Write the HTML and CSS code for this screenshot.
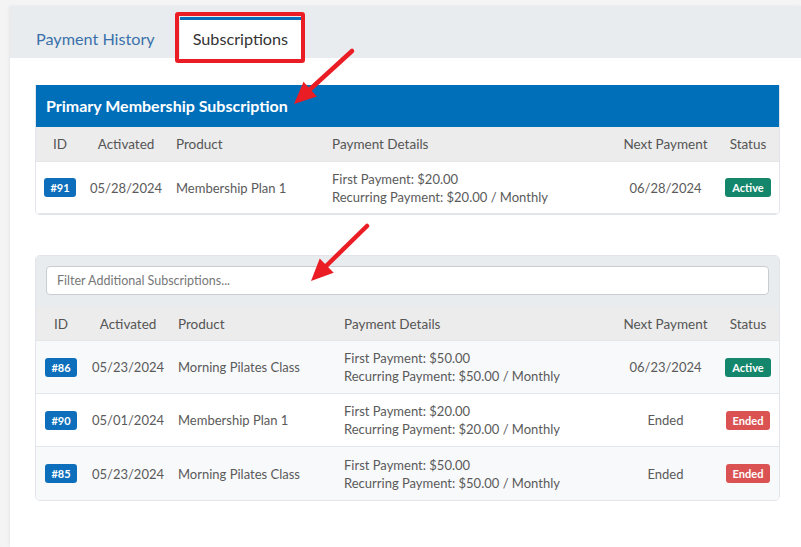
FILE: index.html
```html
<!DOCTYPE html>
<html lang="en">
<head>
<meta charset="utf-8">
<title>Subscriptions</title>
<link rel="stylesheet" href="styles.css">
</head>
<body>
<div class="page">
  <div class="panel">
    <nav class="tabs">
      <a class="tab">Payment History</a>
      <a class="tab active">Subscriptions<span class="annot-box"></span></a>
    </nav>
    <div class="content">
      <section class="card primary">
        <div class="card-title">Primary Membership Subscription</div>
        <div class="grid g1 head">
          <div class="ctr">ID</div>
          <div class="ctr">Activated</div>
          <div class="lft">Product</div>
          <div class="lft">Payment Details</div>
          <div class="ctr">Next Payment</div>
          <div class="ctr">Status</div>
        </div>
        <div class="grid g1 row">
          <div class="ctr"><span class="badge blue">#91</span></div>
          <div class="ctr">05/28/2024</div>
          <div class="lft">Membership Plan 1</div>
          <div class="lft pay"><span>First Payment: $20.00</span><span>Recurring Payment: $20.00 / Monthly</span></div>
          <div class="ctr">06/28/2024</div>
          <div class="ctr"><span class="badge green">Active</span></div>
        </div>
      </section>

      <section class="card additional">
        <div class="filter"><input type="text" placeholder="Filter Additional Subscriptions..."></div>
        <div class="grid g2 head">
          <div class="ctr">ID</div>
          <div class="ctr">Activated</div>
          <div class="lft">Product</div>
          <div class="lft">Payment Details</div>
          <div class="ctr">Next Payment</div>
          <div class="ctr">Status</div>
        </div>
        <div class="grid g2 row striped">
          <div class="ctr"><span class="badge blue">#86</span></div>
          <div class="ctr">05/23/2024</div>
          <div class="lft">Morning Pilates Class</div>
          <div class="lft pay"><span>First Payment: $50.00</span><span>Recurring Payment: $50.00 / Monthly</span></div>
          <div class="ctr">06/23/2024</div>
          <div class="ctr"><span class="badge green">Active</span></div>
        </div>
        <div class="grid g2 row">
          <div class="ctr"><span class="badge blue">#90</span></div>
          <div class="ctr">05/01/2024</div>
          <div class="lft">Membership Plan 1</div>
          <div class="lft pay"><span>First Payment: $20.00</span><span>Recurring Payment: $20.00 / Monthly</span></div>
          <div class="ctr">Ended</div>
          <div class="ctr"><span class="badge red">Ended</span></div>
        </div>
        <div class="grid g2 row striped last">
          <div class="ctr"><span class="badge blue">#85</span></div>
          <div class="ctr">05/23/2024</div>
          <div class="lft">Morning Pilates Class</div>
          <div class="lft pay"><span>First Payment: $50.00</span><span>Recurring Payment: $50.00 / Monthly</span></div>
          <div class="ctr">Ended</div>
          <div class="ctr"><span class="badge red">Ended</span></div>
        </div>
      </section>
    </div>
  </div>

  <svg class="annot-arrows" width="801" height="547" viewBox="0 0 801 547" aria-hidden="true">
    <line x1="352" y1="51" x2="306" y2="93" stroke="#ea1d25" stroke-width="4.5" stroke-linecap="round"/>
    <polygon points="294,104 303.5,81.8 316.9,96.6" fill="#ea1d25"/>
    <line x1="367" y1="226" x2="322" y2="270" stroke="#ea1d25" stroke-width="4.5" stroke-linecap="round"/>
    <polygon points="311,281 319.7,258.5 333.7,272.7" fill="#ea1d25"/>
  </svg>
</div>
</body>
</html>
```

FILE: styles.css
```css
* { box-sizing: border-box; }

html, body {
  margin: 0;
  padding: 0;
  background: #f4f4f4;
  font-family: Lato, "Open Sans", Arial, sans-serif;
  color: #5a5a5a;
}

.page {
  position: relative;
  width: 801px;
  height: 547px;
  overflow: hidden;
  padding: 6px 0 0 10px;
}

.panel {
  background: #fff;
  height: 541px;
  box-shadow: -1px 0 3px rgba(0, 0, 0, 0.06);
}

.tabs {
  height: 52px;
  background: #e9ecef;
  display: flex;
  align-items: flex-end;
  padding-left: 13px;
  gap: 12px;
}

.tab {
  position: relative;
  height: 41px;
  padding: 0 13px 2px;
  border-top: 3px solid transparent;
  display: flex;
  align-items: center;
  font-size: 16.2px;
  color: #3a71aa;
  text-decoration: none;
}

.tab.active {
  background: #fff;
  border-top-color: #0a6db8;
  color: #333;
}

.annot-box {
  position: absolute;
  left: -5px;
  right: -4px;
  top: -8px;
  bottom: -5px;
  border: 4px solid #ea1d25;
  border-radius: 3px;
}

.content {
  padding: 27px 21px 0 25px;
}

.card {
  border: 1px solid #e1e4e8;
  overflow: hidden;
}

.card.primary {
  border-radius: 0 0 5px 5px;
  border-top: none;
}

.card.additional {
  margin-top: 40px;
  border-radius: 5px;
}

.card-title {
  height: 42px;
  margin: 0 -1px;
  padding: 0 11px 2px;
  display: flex;
  align-items: center;
  background: #006fba;
  color: #fff;
  font-weight: 700;
  font-size: 16px;
}

.grid {
  display: grid;
  align-items: center;
}

.g1 { grid-template-columns: 48px 84px 156px 290px 103px 62px; }
.g2 { grid-template-columns: 50px 84px 166px 278px 103px 62px; }

.ctr { text-align: center; }
.lft { padding-left: 8px; }

.head {
  height: 35px;
  background: #ececec;
  font-size: 13.5px;
  color: #555;
  border-bottom: 1px solid #e6e6e6;
}

.g2.head { height: 34px; }

.row {
  height: 52px;
  font-size: 13px;
  background: #fff;
  border-bottom: 1px solid #e3e6ea;
}

.g2.row { height: 53px; }
.row.striped { background: #f8f9fb; }
.row.last { border-bottom: none; }

.pay {
  display: flex;
  flex-direction: column;
  line-height: 18px;
}

.badge {
  display: inline-block;
  height: 19px;
  line-height: 19px;
  padding: 0 7px;
  border-radius: 3px;
  color: #fff;
  font-weight: 700;
  font-size: 11px;
}

.badge.blue { background: #0d6fbb; padding: 0 6px; }
.badge.green { background: #13866b; }
.badge.red { background: #da5352; }

.filter {
  background: #e9ecef;
  padding: 10px 10px 12px;
}

.filter input {
  display: block;
  width: 100%;
  height: 29px;
  border: 1px solid #c9ccd0;
  border-radius: 4px;
  padding: 0 10px;
  font-family: Lato, "Open Sans", Arial, sans-serif;
  font-size: 12.5px;
  color: #555;
  background: #fff;
}

.filter input::placeholder { color: #777; }

.annot-arrows {
  position: absolute;
  left: 0;
  top: 0;
  pointer-events: none;
}
```
